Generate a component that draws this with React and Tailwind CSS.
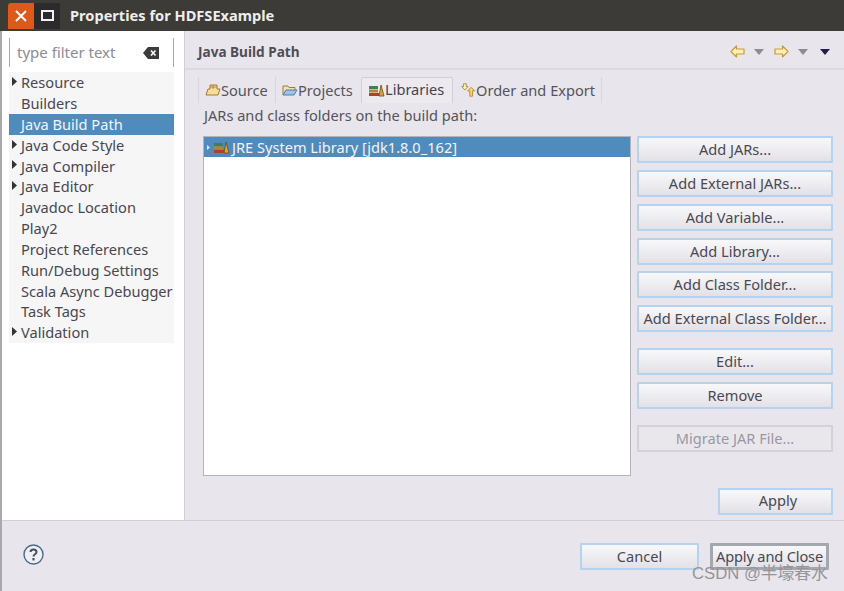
import React from 'react';

const treeItems = [
  { label: 'Resource', arrow: true },
  { label: 'Builders' },
  { label: 'Java Build Path', selected: true },
  { label: 'Java Code Style', arrow: true },
  { label: 'Java Compiler', arrow: true },
  { label: 'Java Editor', arrow: true },
  { label: 'Javadoc Location' },
  { label: 'Play2' },
  { label: 'Project References' },
  { label: 'Run/Debug Settings' },
  { label: 'Scala Async Debugger' },
  { label: 'Task Tags' },
  { label: 'Validation', arrow: true },
];

const LibraryIcon = () => (
  <svg width="16" height="14" viewBox="0 0 16 14" className="shrink-0">
    <rect x="0" y="3" width="9" height="3" fill="#3f7f5f" />
    <rect x="0" y="6.500" width="9" height="3" fill="#b5842c" />
    <rect x="0" y="10" width="10" height="3" fill="#a8432e" />
    <path d="M10 13 L12 2 L15 13 Z" fill="#d9a441" stroke="#6b4a12" strokeWidth="0.8" />
  </svg>
);

const SourceIcon = () => (
  <svg width="16" height="14" viewBox="0 0 16 14" className="shrink-0">
    <path d="M1 12 L3 6 L5 6 L5 2 L12 2 L12 6 L15 6 L13 12 Z" fill="#f3dc9c" stroke="#a87a2c" strokeWidth="1" />
    <path d="M8 2 V6 M5 4 H12" stroke="#a87a2c" strokeWidth="0.8" />
  </svg>
);

const ProjectsIcon = () => (
  <svg width="16" height="14" viewBox="0 0 16 14" className="shrink-0">
    <path d="M1 12 V3 H6 L7 4.500 H13 V7" fill="#f3e2b0" stroke="#9c7a38" strokeWidth="1" />
    <path d="M1 12 L4 7 H15 L12 12 Z" fill="#9cc3e8" stroke="#4f7cab" strokeWidth="1" />
  </svg>
);

const OrderIcon = () => (
  <svg width="16" height="16" viewBox="0 0 18 16" className="shrink-0">
    <path d="M4 1 H7 V4 H9 L5.500 8 L2 4 H4 Z" fill="#fdf3c4" stroke="#a8872c" strokeWidth="1" />
    <path d="M11 15 V9 H8.500 L12.500 5 L16.500 9 H14 V15 Z" fill="#f7d774" stroke="#b5852c" strokeWidth="1" />
  </svg>
);

const NavArrow = ({ flip }) => (
  <svg width="15" height="13" viewBox="0 0 15 13" className={flip ? 'block -scale-x-100' : 'block'}>
    <path d="M1 6.500 L6.500 1 V4 H14 V9 H6.500 V12 Z" fill="#fdf0b4" stroke="#c79a3a" strokeWidth="1.200" strokeLinejoin="round" />
  </svg>
);

const Caret = ({ color }) => (
  <svg width="10" height="6" viewBox="0 0 10 6" className="block">
    <path d="M0 0 H10 L5 6 Z" fill={color} />
  </svg>
);

const DialogButton = ({ label, disabled, focused, className = '' }) => (
  <div
    className={
      (disabled
        ? 'border-2 border-[#d3d2d7] bg-[#e9e7ec] text-[#9a98a3] '
        : focused
          ? 'border-[3px] border-[#a3a8ae] bg-gradient-to-b from-[#f8f8fa] to-[#e3e1e7] text-[#4a4853] '
          : 'border-2 border-[#b5d2ee] bg-gradient-to-b from-[#f8f8fa] to-[#e3e1e7] text-[#4a4853] ') +
      'flex items-center justify-center h-[27px] rounded-[1px] text-[14.600px] whitespace-nowrap ' +
      className
    }
  >
    {label}
  </div>
);

export default function App() {
  return (
    <div className="w-[844px] h-[591px] flex flex-col overflow-hidden bg-[#e8e6ec] font-['Noto_Sans','Open_Sans',sans-serif] text-[14.600px] leading-none">
      {/* title bar */}
      <div className="h-[31px] shrink-0 flex items-center bg-[#3c3b38] pl-[8px]">
        <div className="w-[26px] h-[26px] flex items-center justify-center bg-[#de5a1c] rounded-tl-[3px]">
          <svg width="12" height="12" viewBox="0 0 12 12">
            <path d="M1 1 L11 11 M11 1 L1 11" stroke="#fff" strokeWidth="2" />
          </svg>
        </div>
        <div className="w-[26px] h-[26px] flex items-center justify-center bg-[#2b2b2d]">
          <div className="w-[13px] h-[11px] border-2 border-[#f2f2f2]" />
        </div>
        <span className="ml-[10px] text-[14.600px] font-bold text-[#eeeeee]">Properties for HDFSExample</span>
      </div>

      <div className="flex-1 flex min-h-0 border-l-2 border-[#a9a8ac]">
        <div className="flex-1 flex flex-col min-w-0">
          <div className="flex-1 flex min-h-0">
            {/* left tree */}
            <div className="w-[183px] shrink-0 bg-white border-r border-[#d0cfd5] pl-[7px] pt-[7px]">
              <div className="w-[165px] h-[29px] flex items-center border-x border-[#a9a8ac] pl-[7px] pr-[14px] justify-between text-[#8d8b94] text-[15px]">
                <span>type filter text</span>
                <svg width="16" height="12" viewBox="0 0 16 12">
                  <path d="M0 6 L5 0 H16 V12 H5 Z" fill="#3b3b3b" />
                  <path d="M8 3.500 L12.500 8.500 M12.500 3.500 L8 8.500" stroke="#fff" strokeWidth="1.600" />
                </svg>
              </div>
              <div className="w-[165px] mt-[5px] bg-[#f6f6f6]">
                {treeItems.map((item) => (
                  <div
                    key={item.label}
                    className={
                      'h-[20.850px] flex items-center relative pl-[12px] whitespace-nowrap ' +
                      (item.selected ? 'bg-[#4f8bbd] text-[#f4f4f4]' : 'text-[#4a4750]')
                    }
                  >
                    {item.arrow && (
                      <svg width="5" height="9" viewBox="0 0 5 9" className="absolute left-[3px] top-[5px]">
                        <path d="M0 0 L5 4.500 L0 9 Z" fill="#333" />
                      </svg>
                    )}
                    {item.label}
                  </div>
                ))}
              </div>
            </div>

            {/* right page */}
            <div className="flex-1 flex flex-col min-w-0">
              <div className="h-[39px] shrink-0 flex items-center justify-between border-b-2 border-[#dcdae0] pl-[13px] pr-[14px] pt-[4px]">
                <span className="font-bold text-[13.600px] text-[#4f4d56]">Java Build Path</span>
                <div className="flex items-center">
                  <NavArrow />
                  <span className="ml-[9px]"><Caret color="#8d8b96" /></span>
                  <span className="ml-[10px]"><NavArrow flip /></span>
                  <span className="ml-[9px]"><Caret color="#8d8b96" /></span>
                  <span className="ml-[12px]"><Caret color="#2a1a4a" /></span>
                </div>
              </div>

              <div className="flex-1 flex flex-col pl-[18px] pr-[11px] min-h-0">
                {/* tabs */}
                <div className="flex items-end h-[33px] ml-[-5px] shrink-0 text-[#55535b]">
                  <div className="flex items-center w-[78px] h-[26px] pl-[6px] border-x border-[#d8d6dc]">
                    <SourceIcon />
                    <span>Source</span>
                  </div>
                  <div className="flex items-center w-[85px] h-[26px] pl-[6px]">
                    <ProjectsIcon />
                    <span>Projects</span>
                  </div>
                  <div className="flex items-center w-[92px] h-[26px] pl-[7px] pb-[2px] bg-[#eceaef] border border-b-0 border-[#d2d0d6] rounded-t-[2px] text-[#45434c]">
                    <LibraryIcon />
                    <span>Libraries</span>
                  </div>
                  <div className="flex items-center w-[149px] h-[26px] pl-[7px] border-r border-[#d8d6dc] whitespace-nowrap">
                    <OrderIcon />
                    <span>Order and Export</span>
                  </div>
                </div>
                <div className="mt-[5px] h-[15px] flex items-center pl-[1px] text-[#55535b] shrink-0 whitespace-nowrap">JARs and class folders on the build path:</div>

                <div className="flex mt-[13px] items-start">
                  <div className="w-[428px] h-[340px] shrink-0 bg-white border border-[#b4b3b9]">
                    <div className="h-[20px] flex items-center bg-[#4f8bbd] text-[#f4f4f4] pl-[3px]">
                      <svg width="3" height="5" viewBox="0 0 3 5" className="shrink-0">
                        <path d="M0 0 L3 2.500 L0 5 Z" fill="#dfe9f2" />
                      </svg>
                      <span className="ml-[4px]"><LibraryIcon /></span>
                      <span className="ml-[2px] whitespace-nowrap">JRE System Library [jdk1.8.0_162]</span>
                    </div>
                  </div>
                  <div className="ml-[6px] w-[196px] shrink-0 flex flex-col">
                    <DialogButton label="Add JARs..." />
                    <DialogButton label="Add External JARs..." className="mt-[7px]" />
                    <DialogButton label="Add Variable..." className="mt-[7px]" />
                    <DialogButton label="Add Library..." className="mt-[7px]" />
                    <DialogButton label="Add Class Folder..." className="mt-[6px]" />
                    <DialogButton label="Add External Class Folder..." className="mt-[7px]" />
                    <DialogButton label="Edit..." className="mt-[16px]" />
                    <DialogButton label="Remove" className="mt-[7px]" />
                    <DialogButton label="Migrate JAR File..." disabled className="mt-[16px]" />
                  </div>
                </div>

                <div className="flex justify-end mt-[12px]">
                  <DialogButton label="Apply" className="w-[115px] pl-[5px] pb-[2px]" />
                </div>
              </div>
            </div>
          </div>

          {/* footer */}
          <div className="h-[71px] shrink-0 border-t border-[#d0cfd5] flex items-center justify-between pl-[21px] pr-[15px] relative">
            <svg width="21" height="21" viewBox="0 0 21 21" className="mb-[3px]">
              <circle cx="10.500" cy="10.500" r="9.500" fill="#eef0f5" stroke="#4c6a8c" strokeWidth="1.400" />
              <path d="M7.500 8 C7.500 4.500 13.500 4.500 13.500 8 C13.500 10.500 10.500 10 10.500 12.500" fill="none" stroke="#4a4f5c" strokeWidth="2" />
              <rect x="9.400" y="14" width="2.200" height="2.400" fill="#4a4f5c" />
            </svg>
            <div className="flex items-center">
              <DialogButton label="Cancel" className="w-[119px]" />
              <DialogButton label="Apply and Close" focused className="w-[119px] ml-[11px] tracking-[-0.15px]" />
            </div>
            <span className="absolute left-[690px] top-[45px] font-['Liberation_Sans','Noto_Sans_CJK_SC',sans-serif] text-[16.700px] text-[#96949b] whitespace-nowrap">CSDN @半壕春水</span>
          </div>
        </div>
      </div>
    </div>
  );
}
